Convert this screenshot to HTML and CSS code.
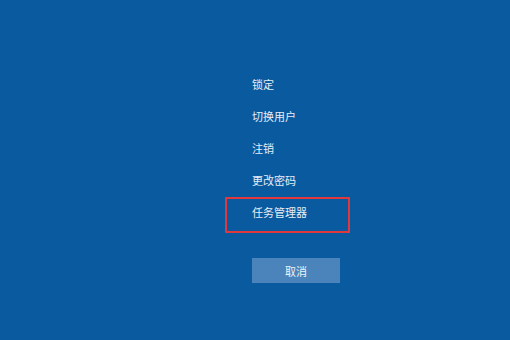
FILE: index.html
```html
<!DOCTYPE html>
<html lang="zh-CN">
<head>
  <meta charset="UTF-8" />
  <title>安全选项</title>
  <link rel="stylesheet" href="styles.css">
</head>
<body>
  <div class="options">
    <div class="item">锁定</div>
    <div class="item">切换用户</div>
    <div class="item">注销</div>
    <div class="item">更改密码</div>
    <div class="highlight">
      <div class="item">任务管理器</div>
    </div>
    <button class="cancel-btn">取消</button>
  </div>
</body>
</html>
```

FILE: styles.css
```css
html, body {
  height: 100%;
}
body {
  margin: 0;
  background-color: #0a5aa0;
  font-family: "Noto Sans CJK SC", "Noto Sans", sans-serif;
  color: #e6eef6;
  overflow: hidden;
}
.options {
  padding: 68px 0 0 252px;
}
.item {
  height: 32px;
  line-height: 32px;
  font-size: 11px;
}
.highlight {
  box-sizing: border-box;
  width: 125px;
  height: 36px;
  margin: 1px 0 0 -27px;
  padding-left: 25px;
  border: 2px solid #e0383d;
}
.highlight .item {
  height: 26px;
  line-height: 26px;
}
.cancel-btn {
  display: block;
  width: 88px;
  height: 25px;
  margin-top: 25px;
  padding: 0;
  border: none;
  background-color: #4b84ba;
  color: #eef3f8;
  font-family: inherit;
  font-size: 11px;
}
```
